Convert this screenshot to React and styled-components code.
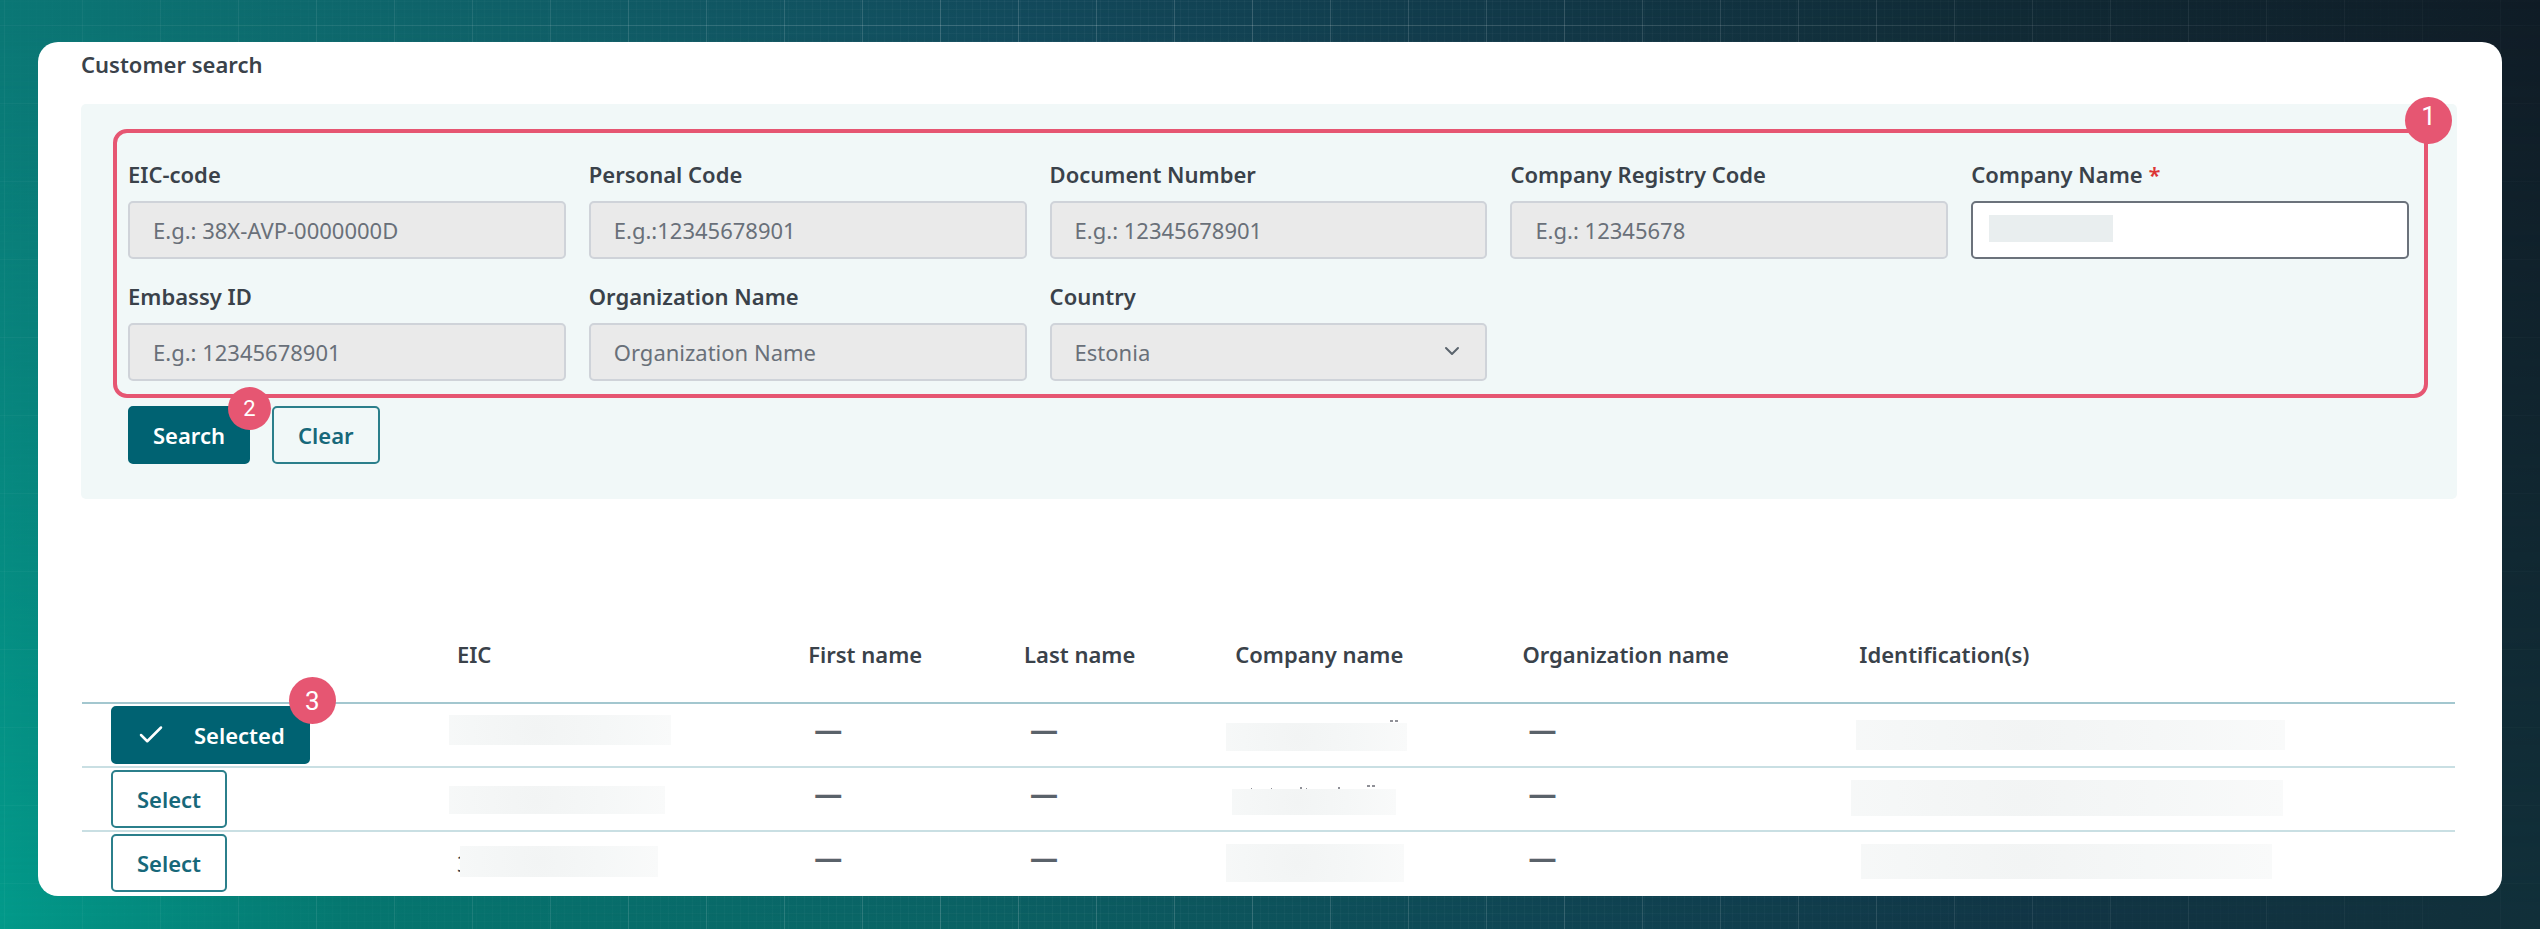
import React from 'react';
import styled, { createGlobalStyle, css } from 'styled-components';
import { Check, ChevronDown } from 'lucide-react';

const color = {
  ink: '#3a424a',
  muted: '#697079',
  primary: '#006272',
  outline: '#2b7f8b',
  panel: '#f1f8f8',
  disabled: '#eaeaea',
  disabledLine: '#cfd3d9',
  accent: '#e65672',
};

const GlobalStyle = createGlobalStyle`
  *, *::before, *::after { box-sizing: border-box; }
  body {
    margin: 0;
    font-family: "Noto Sans", "Open Sans", sans-serif;
    font-size: 22px;
    line-height: 28px;
    color: ${color.ink};
  }
  button, input, select { font: inherit; margin: 0; }
`;

const Page = styled.div`
  position: relative;
  isolation: isolate;
  min-height: 100vh;
  padding: 42px 38px 33px;
  background: linear-gradient(
    90deg,
    #0b7775,
    #106068 20%,
    #134a5c 40%,
    #123a4a 58%,
    #112b36 78%,
    #101c26
  );

  &::before,
  &::after {
    content: '';
    position: absolute;
    inset: 0;
    z-index: -1;
  }

  &::before {
    background: linear-gradient(
      90deg,
      #029a8a,
      #05766f 14%,
      #0a6264 38%,
      #0f4654 60%,
      #113646 80%,
      #11303a
    );
    mask-image: linear-gradient(transparent, #000);
  }

  &::after {
    background:
      linear-gradient(90deg, rgba(255, 255, 255, 0.16) 1px, transparent 1px) 4px 0 / 78px 78px,
      linear-gradient(rgba(255, 255, 255, 0.16) 1px, transparent 1px) 0 25px / 78px 78px,
      linear-gradient(90deg, rgba(255, 255, 255, 0.03) 1px, transparent 1px) 4px 0 / 8px 8px,
      linear-gradient(rgba(255, 255, 255, 0.03) 1px, transparent 1px) 0 1px / 8px 8px;
    mask-image: linear-gradient(90deg, rgba(0, 0, 0, 0.2), #000 40%, rgba(0, 0, 0, 0.8) 65%, rgba(0, 0, 0, 0.1));
  }
`;

const Card = styled.main`
  padding: 7px 45px 0 43px;
  background: #fff;
  border-radius: 20px;
`;

const Title = styled.h1`
  margin: 0 0 25px;
  font-size: 22px;
  line-height: 30px;
  font-weight: 600;
`;

const SearchPanel = styled.form`
  padding: 25px 29px 35px 32px;
  background: ${color.panel};
  border-radius: 5px;
`;

const FieldGroup = styled.div`
  position: relative;
  display: grid;
  grid-template-columns: repeat(5, 1fr);
  gap: 23px;
  padding: 27px 15px 13px 11px;
  border: 4px solid ${color.accent};
  border-radius: 14px;
`;

const Field = styled.div`
  position: relative;
  display: flex;
  flex-direction: column;
  gap: 13px;
`;

const Label = styled.label`
  font-weight: 600;
`;

const Required = styled.span`
  color: #dc3535;
`;

const control = css`
  width: 100%;
  height: 58px;
  padding: 0 23px;
  border: 2px solid ${color.disabledLine};
  border-radius: 5px;
  background: ${color.disabled};
  color: ${color.muted};
  opacity: 1;
  outline: none;
`;

const Input = styled.input`
  ${control}

  &::placeholder {
    color: ${color.muted};
    opacity: 1;
  }

  &:enabled {
    background: #fff;
    border-color: #6b727b;
  }
`;

const Select = styled.select`
  ${control}
  appearance: none;
`;

const Chevron = styled(ChevronDown)`
  position: absolute;
  right: 23px;
  bottom: 18px;
  color: #5b646d;
  pointer-events: none;
`;

const Actions = styled.div`
  display: flex;
  gap: 22px;
  margin-top: 8px;
  padding-left: 15px;
`;

const Anchor = styled.div`
  position: relative;
  display: inline-flex;
`;

const Button = styled.button`
  display: inline-flex;
  align-items: center;
  gap: 28px;
  height: 58px;
  padding: 0 ${(p) => (p.$primary ? 23 : 24)}px;
  border: 2px solid ${(p) => (p.$primary ? color.primary : color.outline)};
  border-radius: 5px;
  background: ${(p) => (p.$primary ? color.primary : 'transparent')};
  color: ${(p) => (p.$primary ? '#fff' : '#17687a')};
  font-weight: 600;
`;

const Badge = styled.span`
  position: absolute;
  z-index: 1;
  top: ${(p) => p.$top}px;
  right: ${(p) => p.$right}px;
  display: flex;
  align-items: center;
  justify-content: center;
  width: ${(p) => (p.$small ? 43 : 47)}px;
  height: ${(p) => (p.$small ? 43 : 47)}px;
  padding-bottom: ${(p) => (p.$raised ? 10 : 0)}px;
  border-radius: 50%;
  background: ${color.accent};
  color: #fff;
  font-family: Roboto, sans-serif;
  font-size: ${(p) => (p.$small ? 22 : 26)}px;
  line-height: 28px;
`;

const Results = styled.table`
  width: calc(100% - 3px);
  margin: 108px 0 0 1px;
  table-layout: fixed;
  border-collapse: separate;
  border-spacing: 0;
`;

const Column = styled.col`
  width: ${(p) => p.$width};
`;

const HeadCell = styled.th`
  height: 97px;
  padding: 0 0 2px;
  border-bottom: 2px solid #a3c7cf;
  font-weight: 600;
  text-align: left;
`;

const Cell = styled.td`
  position: relative;
  height: 64px;
  padding: 0 0 0 ${(p) => (p.$action ? 29 : 0)}px;
  border-bottom: 2px solid #c9dfe3;
  vertical-align: middle;

  tr:last-child > & {
    border-bottom-color: transparent;
  }
`;

const Empty = styled.span`
  display: block;
  padding: 0 0 12px 6px;
  font-size: 28px;
  font-weight: 700;
  color: #5a626a;
`;

const Redaction = styled.span`
  position: absolute;
  left: ${(p) => p.$box[0]}px;
  top: ${(p) => p.$box[1]}px;
  width: ${(p) => p.$box[2]}px;
  height: ${(p) => p.$box[3]}px;
  background: radial-gradient(circle at 40% 50%, #f2f4f4, #f5f7f7 50%, #f9fafa);
`;

const FieldRedaction = styled.span`
  position: absolute;
  left: 18px;
  bottom: 17px;
  width: 124px;
  height: 27px;
  background: #e9eeef;
`;

const Traces = styled.svg`
  position: absolute;
  left: 0;
  top: 0;
`;

const FIELDS = [
  { id: 'eic', label: 'EIC-code', placeholder: 'E.g.: 38X-AVP-0000000D' },
  { id: 'personal', label: 'Personal Code', placeholder: 'E.g.:12345678901' },
  { id: 'document', label: 'Document Number', placeholder: 'E.g.: 12345678901' },
  { id: 'registry', label: 'Company Registry Code', placeholder: 'E.g.: 12345678' },
  { id: 'company', label: 'Company Name', required: true },
  { id: 'embassy', label: 'Embassy ID', placeholder: 'E.g.: 12345678901' },
  { id: 'organization', label: 'Organization Name', placeholder: 'Organization Name' },
];

const COLUMNS = [
  { name: '', width: '15.8%' },
  { name: 'EIC', width: '14.8%' },
  { name: 'First name', width: '9.1%' },
  { name: 'Last name', width: '8.9%' },
  { name: 'Company name', width: '12.1%' },
  { name: 'Organization name', width: '14.2%' },
  { name: 'Identification(s)', width: 'auto' },
];

/* Boxes are [left, top, width, height] inside their cell. */
const ROWS = [
  {
    selected: true,
    eic: [-8, 11, 222, 30],
    company: [-9, 19, 181, 28],
    ids: [-3, 16, 429, 30],
    traces: [[155, 16, 3], [160, 16, 3]],
  },
  {
    eic: [-8, 18, 216, 28],
    company: [-3, 21, 164, 26],
    ids: [-8, 12, 432, 36],
    traces: [[132, 17, 3], [137, 17, 3], [16, 20, 1], [36, 20, 1], [65, 19, 2], [71, 20, 1], [103, 19, 2]],
  },
  {
    eic: [3, 14, 198, 31],
    eicText: '3',
    company: [-9, 12, 178, 38],
    ids: [2, 12, 411, 35],
  },
];

function SearchForm() {
  return (
    <SearchPanel onSubmit={(e) => e.preventDefault()}>
      <FieldGroup>
        {FIELDS.map((f) => (
          <Field key={f.id}>
            <Label htmlFor={f.id}>
              {f.label}
              {f.required && <Required> *</Required>}
            </Label>
            <Input id={f.id} type="text" placeholder={f.placeholder} disabled={!f.required} required={f.required} />
            {f.required && <FieldRedaction />}
          </Field>
        ))}
        <Field>
          <Label htmlFor="country">Country</Label>
          <Select id="country" disabled defaultValue="Estonia">
            <option>Estonia</option>
          </Select>
          <Chevron size={24} strokeWidth={2} />
        </Field>
        <Badge $top={-36} $right={-28} $raised>1</Badge>
      </FieldGroup>
      <Actions>
        <Anchor>
          <Button type="submit" $primary>Search</Button>
          <Badge $top={-19} $right={-21} $small>2</Badge>
        </Anchor>
        <Button type="reset">Clear</Button>
      </Actions>
    </SearchPanel>
  );
}

function ResultRow({ row }) {
  return (
    <tr>
      <Cell $action>
        {row.selected ? (
          <Anchor>
            <Button type="button" $primary>
              <Check size={30} strokeWidth={2} />
              Selected
            </Button>
            <Badge $top={-29} $right={-26}>3</Badge>
          </Anchor>
        ) : (
          <Anchor>
            <Button type="button">Select</Button>
          </Anchor>
        )}
      </Cell>
      <Cell>
        {row.eicText}
        <Redaction $box={row.eic} />
      </Cell>
      <Cell><Empty>—</Empty></Cell>
      <Cell><Empty>—</Empty></Cell>
      <Cell>
        {row.traces && (
          <Traces width="180" height="24" aria-hidden="true">
            {row.traces.map(([x, y, w]) => (
              <rect key={x} x={x} y={y} width={w} height={w > 2 ? 2 : w} fill="#8f9097" />
            ))}
          </Traces>
        )}
        <Redaction $box={row.company} />
      </Cell>
      <Cell><Empty>—</Empty></Cell>
      <Cell><Redaction $box={row.ids} /></Cell>
    </tr>
  );
}

export default function App() {
  return (
    <>
      <GlobalStyle />
      <Page>
        <Card>
          <Title>Customer search</Title>
          <SearchForm />
          <Results>
            <colgroup>
              {COLUMNS.map((c) => <Column key={c.name} $width={c.width} />)}
            </colgroup>
            <thead>
              <tr>
                {COLUMNS.map((c) => <HeadCell key={c.name} scope="col">{c.name}</HeadCell>)}
              </tr>
            </thead>
            <tbody>
              {ROWS.map((row, i) => <ResultRow key={i} row={row} />)}
            </tbody>
          </Results>
        </Card>
      </Page>
    </>
  );
}
